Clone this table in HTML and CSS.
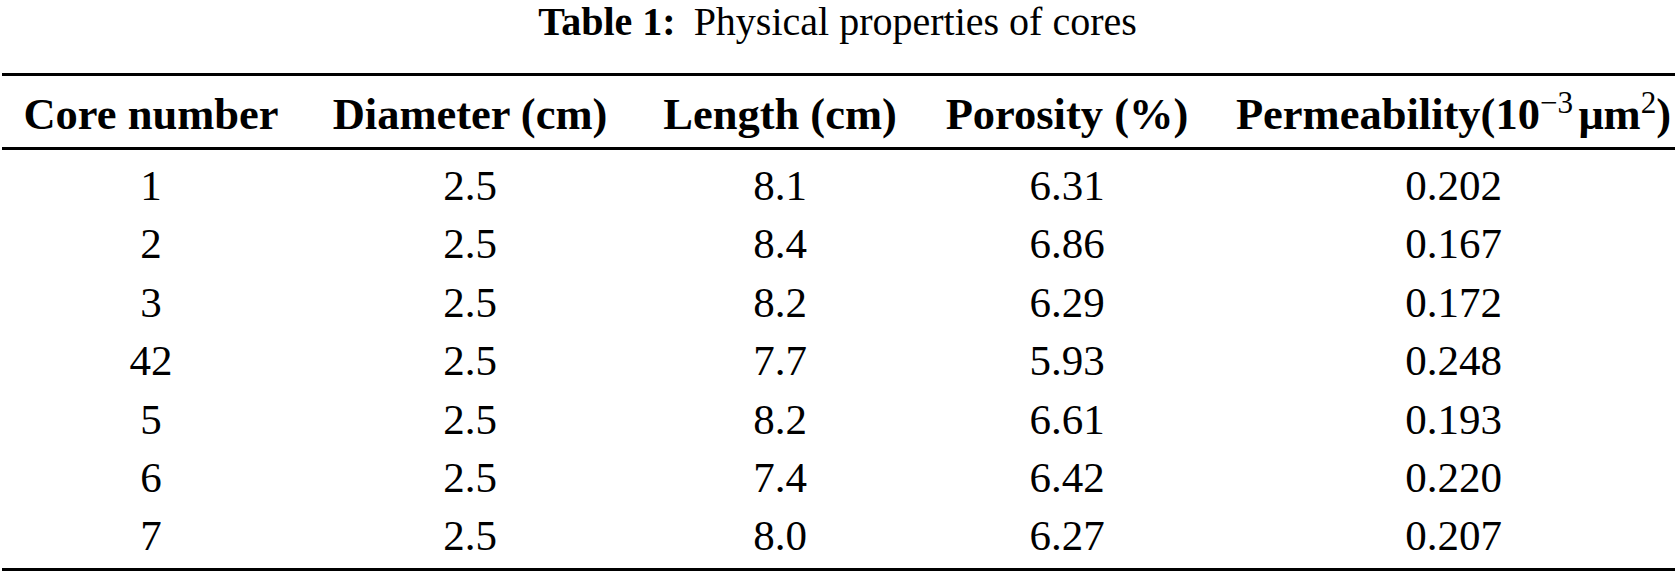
FILE: index.html
```html
<!DOCTYPE html>
<html lang="en">
<head>
<meta charset="utf-8">
<title>Table 1: Physical properties of cores</title>
<link rel="stylesheet" href="styles.css">
</head>
<body>
<div class="page">
  <p class="caption"><span class="caption-label">Table 1:</span>Physical properties of cores</p>
  <table class="data-table">
    <colgroup>
      <col class="c1">
      <col class="c2">
      <col class="c3">
      <col class="c4">
      <col class="c5">
    </colgroup>
    <thead>
      <tr>
        <th>Core number</th>
        <th>Diameter (cm)</th>
        <th>Length (cm)</th>
        <th>Porosity (%)</th>
        <th class="last">Permeability(10<sup>−3</sup><span class="mu">μm<sup>2</sup></span>)</th>
      </tr>
    </thead>
    <tbody>
      <tr><td>1</td><td>2.5</td><td>8.1</td><td>6.31</td><td class="last">0.202</td></tr>
      <tr><td>2</td><td>2.5</td><td>8.4</td><td>6.86</td><td class="last">0.167</td></tr>
      <tr><td>3</td><td>2.5</td><td>8.2</td><td>6.29</td><td class="last">0.172</td></tr>
      <tr><td>42</td><td>2.5</td><td>7.7</td><td>5.93</td><td class="last">0.248</td></tr>
      <tr><td>5</td><td>2.5</td><td>8.2</td><td>6.61</td><td class="last">0.193</td></tr>
      <tr><td>6</td><td>2.5</td><td>7.4</td><td>6.42</td><td class="last">0.220</td></tr>
      <tr><td>7</td><td>2.5</td><td>8.0</td><td>6.27</td><td class="last">0.207</td></tr>
    </tbody>
  </table>
</div>
</body>
</html>
```

FILE: styles.css
```css
html, body {
  margin: 0;
  padding: 0;
  background: #ffffff;
}

.page {
  width: 1675px;
  color: #000000;
  font-family: "Liberation Serif", "Times New Roman", serif;
}

.caption {
  margin: 0;
  font-size: 40px;
  line-height: 43px;
  text-align: center;
}

.caption-label {
  font-weight: bold;
  margin-right: 0.45em;
}

.data-table {
  margin: 30px 0 0 2px;
  width: 1673px;
  table-layout: fixed;
  border-collapse: separate;
  border-spacing: 0;
  font-size: 43px;
}

.c1 { width: 298px; }
.c2 { width: 340px; }
.c3 { width: 280px; }
.c4 { width: 294px; }
.c5 { width: 461px; }

.data-table th {
  font-size: 44.5px;
  font-weight: bold;
  text-align: center;
  white-space: nowrap;
  line-height: 50px;
  padding: 13px 0 8px 0;
  border-top: 3px solid #000;
  border-bottom: 3px solid #000;
}

.data-table td {
  text-align: center;
  line-height: 58.4px;
  padding: 0;
}

.data-table .last {
  padding-left: 18px;
}

.data-table tbody tr:first-child td {
  padding-top: 7px;
}

.data-table tbody tr:last-child td {
  padding-bottom: 2px;
  border-bottom: 3px solid #000;
}

.data-table sup {
  font-size: 0.7em;
  line-height: 0;
  vertical-align: 0.5em;
  font-weight: normal;
}

.mu {
  margin-left: 0.12em;
}
```
